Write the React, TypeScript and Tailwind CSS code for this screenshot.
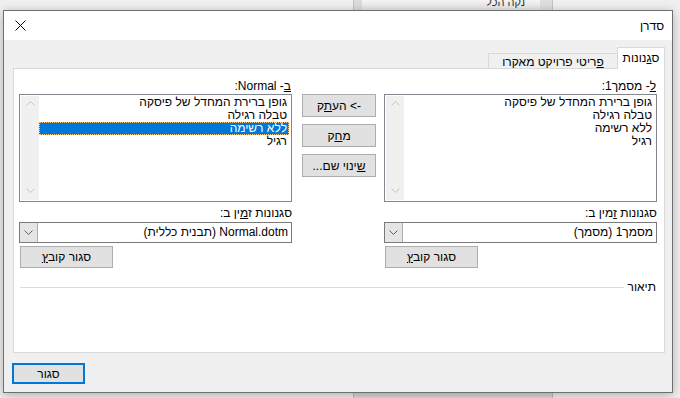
import type { ReactNode } from "react";

const styles = ["גופן ברירת המחדל של פיסקה", "טבלה רגילה", "ללא רשימה", "רגיל"];

function Chevron({ up = false }: { up?: boolean }) {
    return (
        <svg width="9" height="5" viewBox="0 0 9 5" className="block">
            <path
                d={up ? "M0.5 4.5 L4.5 0.5 L8.5 4.5" : "M0.5 0.5 L4.5 4.5 L8.5 0.5"}
                fill="none"
                stroke="currentColor"
                strokeWidth="1"
            />
        </svg>
    );
}

function StyleList({ selected }: { selected?: number }) {
    return (
        <div className="flex h-[108px] border border-[#828790] bg-white p-px">
            <div className="flex-1 pr-px">
                {styles.map((s, i) => (
                    <div
                        key={s}
                        className={
                            i === selected
                                ? "h-[13px] bg-[#0078d7] pr-[2px] leading-[13px] text-white outline outline-1 -outline-offset-1 outline-dotted outline-[#f3c98b]"
                                : "h-[13px] pr-[2px] leading-[13px]"
                        }
                    >
                        {s}
                    </div>
                ))}
            </div>
            <div className="flex w-[18px] flex-col items-center justify-between bg-[#f0f0f0] pb-[7px] pt-[5px] text-[#c5c5c5]">
                <Chevron up />
                <Chevron />
            </div>
        </div>
    );
}

function Combo({ children }: { children: ReactNode }) {
    return (
        <div className="flex h-[21px] border border-[#7a7a7a] bg-white">
            <div className="flex-1 pr-[3px] leading-[19px]">{children}</div>
            <div className="flex w-[18px] items-center justify-center border-r border-[#adadad] bg-[#e5e5e5] text-[#606060]">
                <Chevron />
            </div>
        </div>
    );
}

function Button({ children, className = "" }: { children: ReactNode; className?: string }) {
    return (
        <div
            className={`flex items-center justify-center border border-[#adadad] bg-[#e1e1e1] leading-none ${className}`}
        >
            {children}
        </div>
    );
}

function Column({
    label,
    selected,
    availLabel,
    combo,
}: {
    label: ReactNode;
    selected?: number;
    availLabel: ReactNode;
    combo: ReactNode;
}) {
    return (
        <div className="flex w-[273px] flex-col">
            <div className="-mt-[16px] h-[16px] pr-px leading-[16px]">{label}</div>
            <StyleList selected={selected} />
            <div className="mt-[3px] h-[16px] leading-[16px]">{availLabel}</div>
            <div className="mt-px">
                <Combo>{combo}</Combo>
            </div>
            <Button className="ml-px mt-[3px] h-[22px] w-[93px] self-end">
                <span>
                    סגור קוב<span className="underline">ץ</span>
                </span>
            </Button>
        </div>
    );
}

export default function App() {
    return (
        <div className="relative h-[398px] w-[680px] overflow-hidden bg-[#f0f0f0] font-['Liberation_Sans','DejaVu_Sans',sans-serif] text-[12px] text-black">
            {/* window behind the dialog */}
            <div className="absolute left-[353px] top-0 h-[10px] w-[9px] border-l border-[#c4c4c4] bg-[#dcdcdc]" />
            <div
                dir="rtl"
                className="absolute left-[362px] top-0 h-[10px] w-[178px] bg-gradient-to-b from-[#f4f4f4] to-[#e6e6e6] pr-[15px] text-[11px] leading-[4px] text-[#333]"
            >
                נקה הכל
            </div>
            <div className="absolute left-[540px] top-0 h-[10px] w-[13px] border-r border-[#c4c4c4] bg-[#dedede]" />
            <div
                dir="rtl"
                className="absolute left-[353px] top-[392px] h-[12px] w-[200px] border-x border-[#bdbdbd] bg-gradient-to-b from-[#d6d6d6] to-[#e2e2e2] pr-[30px] text-[11px] leading-[22px] text-[#333]"
            >
                זמינים
            </div>

            {/* dialog */}
            <div
                dir="rtl"
                className="absolute left-[3px] top-[10px] flex h-[383px] w-[670px] flex-col border border-[#6f6f6f] bg-[#f0f0f0] shadow-[0_2px_10px_rgba(0,0,0,0.28)]"
            >
                <div className="flex h-[29px] items-center justify-between bg-white pl-[11px] pr-[8px]">
                    <span className="text-[12px]">סדרן</span>
                    <svg width="11" height="11" viewBox="0 0 11 11">
                        <path d="M0.5 0.5 L10.5 10.5 M10.5 0.5 L0.5 10.5" stroke="#000" strokeWidth="1" />
                    </svg>
                </div>

                <div className="flex flex-1 flex-col pl-[9px] pr-[7px] pt-[7px]">
                    {/* tabs */}
                    <div className="flex h-[21px] items-end">
                        <div className="relative z-10 -mb-px flex h-[22px] w-[48px] items-center justify-center border border-b-0 border-[#d9d9d9] bg-white pb-px">
                            <span>
                                ס<span className="underline">ג</span>נונות
                            </span>
                        </div>
                        <div className="flex h-[15px] w-[129px] items-center justify-center border border-b-0 border-l-[#d9d9d9] border-r-0 border-t-[#d9d9d9] bg-[#f0f0f0] pt-px">
                            <span>
                                <span className="underline">פ</span>ריטי פרויקט מאקרו
                            </span>
                        </div>
                    </div>

                    {/* panel */}
                    <div className="flex h-[285px] flex-col border border-[#d9d9d9] bg-white pl-[5px] pr-[7px] pt-[25px]">
                        <div className="flex">
                            <Column
                                label={
                                    <span>
                                        <span className="underline">ל</span>- מסמך1:
                                    </span>
                                }
                                availLabel={
                                    <span>
                                        סגנונות <span className="underline">ז</span>מין ב:
                                    </span>
                                }
                                combo="מסמך1 (מסמך)"
                            />
                            <div className="ml-[10px] mr-[8px] flex w-[74px] flex-col">
                                <Button className="h-[23px]">
                                    <span>
                                        {"-> "}הע<span className="underline">ת</span>ק
                                    </span>
                                </Button>
                                <Button className="mt-[7px] h-[23px]">
                                    <span>
                                        מ<span className="underline">ח</span>ק
                                    </span>
                                </Button>
                                <Button className="mt-[7px] h-[23px]">
                                    <span>
                                        <span className="underline">ש</span>ינוי שם...
                                    </span>
                                </Button>
                            </div>
                            <Column
                                label={
                                    <span>
                                        <span className="underline">ב</span>- Normal:
                                    </span>
                                }
                                selected={2}
                                availLabel={
                                    <span>
                                        סגנונות ז<span className="underline">מ</span>ין ב:
                                    </span>
                                }
                                combo="Normal.dotm (תבנית כללית)"
                            />
                        </div>

                        {/* description */}
                        <div className="mt-[11px] flex h-[16px] items-center pl-px pr-px">
                            <span className="leading-[16px]">תיאור</span>
                            <div className="mr-[4px] h-px flex-1 bg-[#dcdcdc]" />
                        </div>
                    </div>

                    <div className="flex justify-end pt-[10px]">
                        <div className="-ml-px flex h-[21px] w-[73px] items-center justify-center border-2 border-[#0078d7] bg-[#e1e1e1] leading-none">
                            סגור
                        </div>
                    </div>
                </div>
            </div>
        </div>
    );
}
